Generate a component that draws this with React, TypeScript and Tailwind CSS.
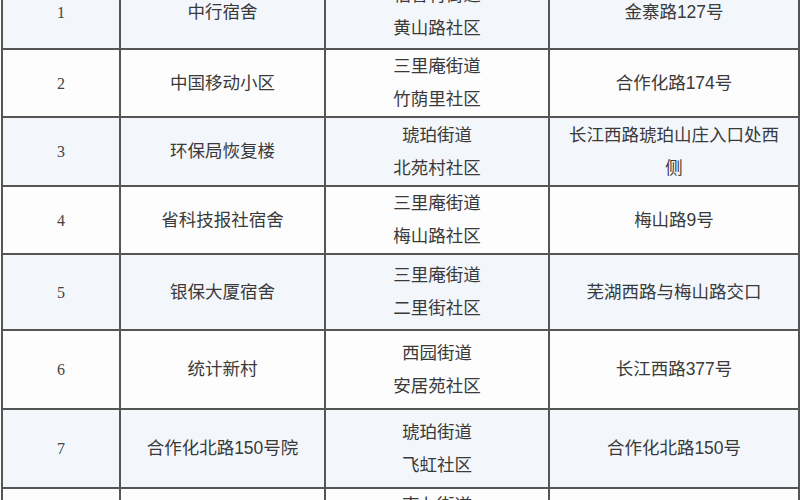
const rows = [
  { no: "1", name: "中行宿舍", street: ["稻香村街道", "黄山路社区"], addr: "金寨路127号", h: "h-[74px]" },
  { no: "2", name: "中国移动小区", street: ["三里庵街道", "竹荫里社区"], addr: "合作化路174号", h: "h-[68px]" },
  { no: "3", name: "环保局恢复楼", street: ["琥珀街道", "北苑村社区"], addr: "长江西路琥珀山庄入口处西侧", h: "h-[69px]" },
  { no: "4", name: "省科技报社宿舍", street: ["三里庵街道", "梅山路社区"], addr: "梅山路9号", h: "h-[67px]" },
  { no: "5", name: "银保大厦宿舍", street: ["三里庵街道", "二里街社区"], addr: "芜湖西路与梅山路交口", h: "h-[76px]" },
  { no: "6", name: "统计新村", street: ["西园街道", "安居苑社区"], addr: "长江西路377号", h: "h-[79px]" },
  { no: "7", name: "合作化北路150号院", street: ["琥珀街道", "飞虹社区"], addr: "合作化北路150号", h: "h-[79px]" },
  { no: "8", name: "南七里站宿舍", street: ["南七街道", "南七里站社区"], addr: "金寨路", h: "h-[100px]" },
];

export default function App() {
  return (
    <div className="h-[500px] w-[800px] overflow-hidden bg-white">
      <table className="-mt-[26px] ml-[1px] w-[797px] table-fixed border-collapse border-2 border-[#555] text-[#3a3a3a] font-['Liberation_Sans','Noto_Sans_CJK_SC',sans-serif] text-[17.5px] leading-[33px]">
        <colgroup>
          <col className="w-[118px]" />
          <col className="w-[205px]" />
          <col className="w-[224px]" />
          <col className="w-[250px]" />
        </colgroup>
        <tbody>
          {rows.map((r, i) => (
            <tr key={r.no} className={`${r.h} ${i % 2 === 0 ? "bg-[#f3f7fc]" : "bg-[#fdfdfd]"}`}>
              <td className="border-2 border-[#555] p-0 text-center font-['Liberation_Serif',serif] text-[16px] text-[#444]">
                {r.no}
              </td>
              <td className="border-2 border-[#555] px-3 py-0 text-center">{r.name}</td>
              <td className={`border-2 border-[#555] px-3 py-0 text-center ${r.no === "8" ? "align-top" : ""}`}>
                {r.street.map((s) => (
                  <div key={s}>{s}</div>
                ))}
              </td>
              <td className="border-2 border-[#555] px-3 py-0 text-center">{r.addr}</td>
            </tr>
          ))}
        </tbody>
      </table>
    </div>
  );
}
